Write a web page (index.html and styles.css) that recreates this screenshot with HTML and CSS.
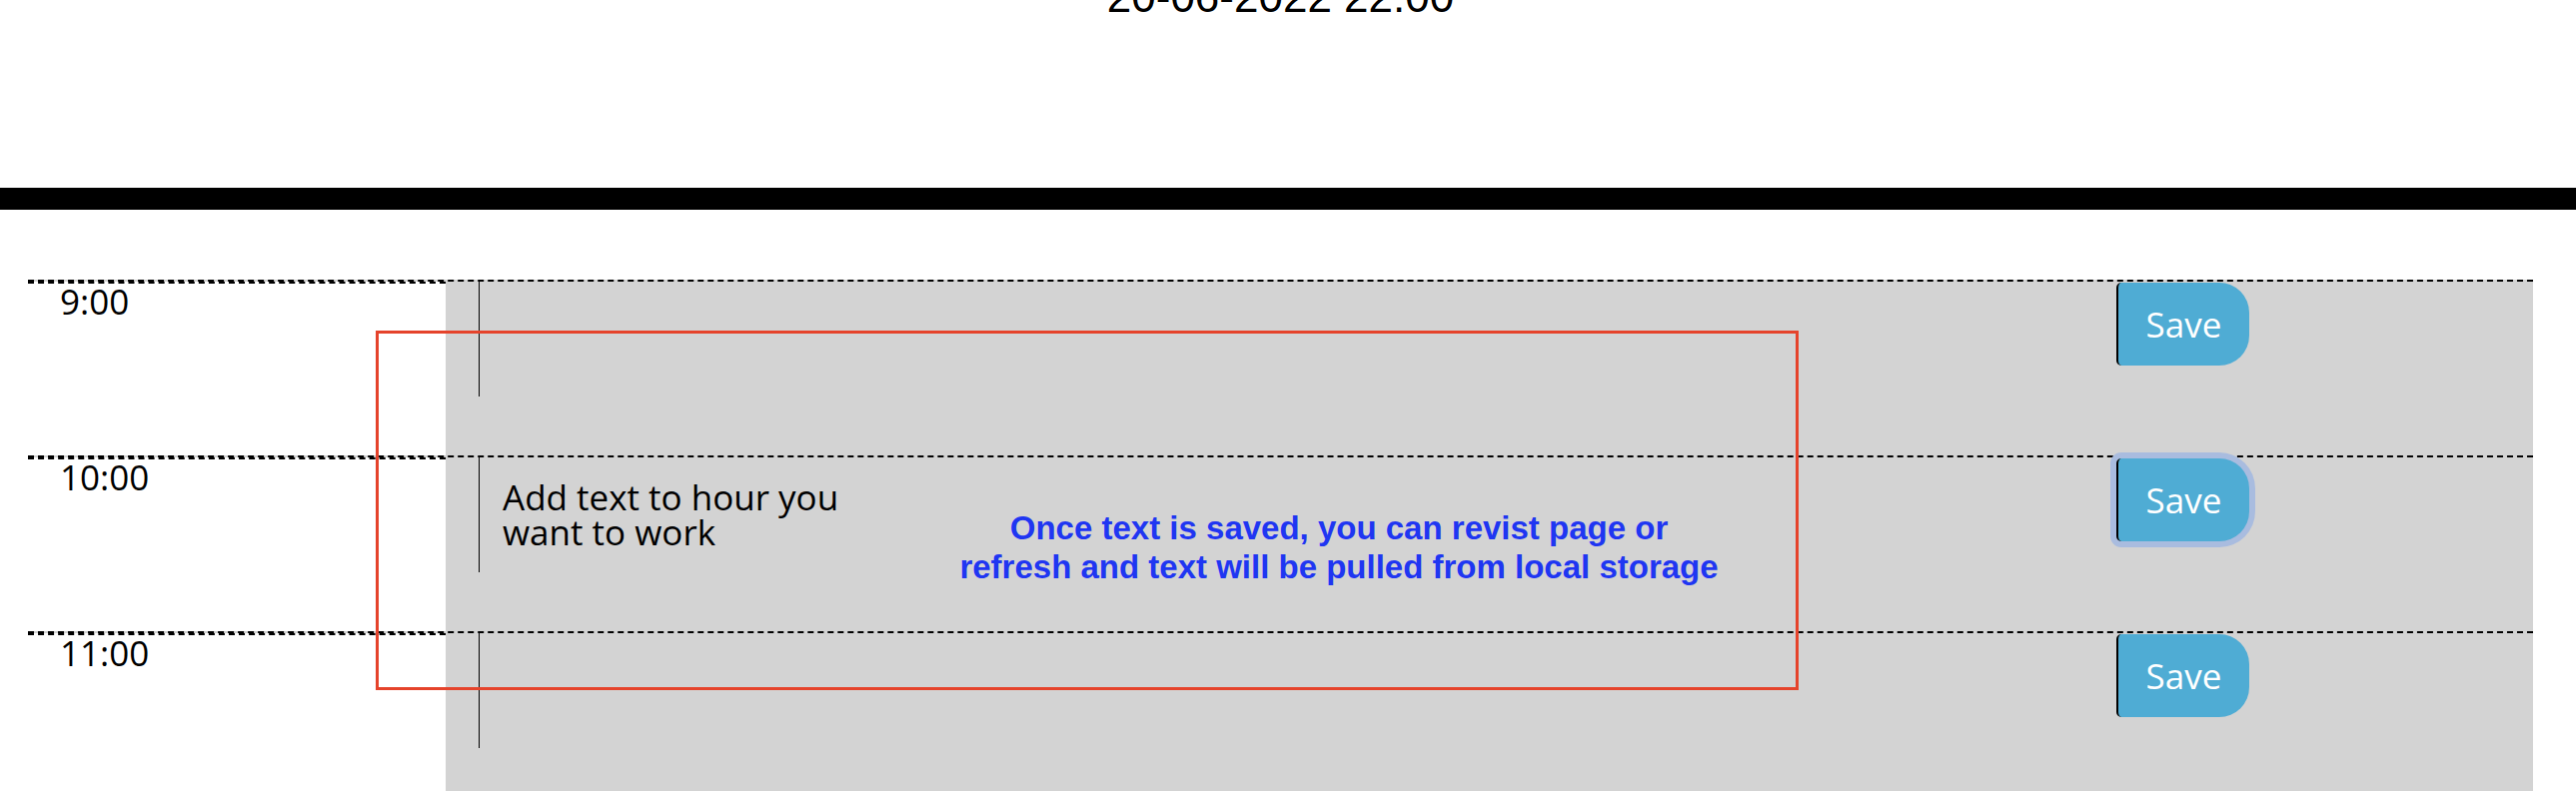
FILE: index.html
```html
<!DOCTYPE html>
<html lang="en">
<head>
<meta charset="utf-8">
<title>Work Day Scheduler</title>
<link rel="stylesheet" href="styles.css">
</head>
<body>
<header class="jumbotron">
  <p class="current-day">20-06-2022 22:00</p>
</header>
<main class="container">
  <div class="row time-block past">
    <div class="hour">9:00</div>
    <textarea class="description"></textarea>
    <button class="save-btn">Save</button>
  </div>
  <div class="row time-block past">
    <div class="hour">10:00</div>
    <textarea class="description">Add text to hour you
want to work</textarea>
    <button class="save-btn focused">Save</button>
  </div>
  <div class="row time-block past">
    <div class="hour">11:00</div>
    <textarea class="description"></textarea>
    <button class="save-btn">Save</button>
  </div>
</main>
<div class="note-box"></div>
<p class="note-text">Once text is saved, you can revist page or<br>refresh and text will be pulled from local storage</p>
</body>
</html>
```

FILE: styles.css
```css
html, body {
  margin: 0;
  padding: 0;
  background: #ffffff;
  overflow: hidden;
}

body {
  font-family: "Open Sans", "Noto Sans", sans-serif;
  line-height: 1;
  width: 2578px;
  height: 792px;
  position: relative;
}

.jumbotron {
  display: flow-root;
  box-sizing: content-box;
  height: 188px;
  padding: 0 43px 0 28px;
  border-bottom: 22px solid #000000;
  text-align: center;
}

.current-day {
  margin: -25px 0 0 0;
  font-family: "Liberation Sans", Arial, sans-serif;
  font-size: 44px;
  line-height: 44px;
  color: #000000;
}

.container {
  margin: 70px 43px 0 28px;
}

.row {
  display: flex;
  align-items: flex-start;
  box-sizing: border-box;
  height: 176px;
  border-top: 2px dashed #000000;
}

.past {
  background-color: #d3d3d3;
}

.hour {
  box-sizing: border-box;
  width: 418px;
  height: 100%;
  flex: none;
  padding-left: 32px;
  background: #ffffff;
  border-top: 2px dashed #000000;
  font-size: 35px;
  line-height: 1;
  color: #000000;
}

.description {
  flex: 1;
  box-sizing: border-box;
  height: 115px;
  margin: 0 0 0 33px;
  padding: 22px 23px;
  background: transparent;
  border: none;
  border-left: 1px solid #000000;
  resize: none;
  outline: none;
  font-family: "Open Sans", "Noto Sans", sans-serif;
  font-size: 35px;
  line-height: 1;
  color: #000000;
  white-space: pre-wrap;
  overflow: hidden;
}

.save-btn {
  flex: none;
  box-sizing: border-box;
  width: 133px;
  height: 83px;
  margin: 1px 284px 0 0;
  padding: 0;
  display: flex;
  align-items: center;
  justify-content: center;
  background-color: #4facd4;
  color: #ffffff;
  border: none;
  border-left: 2px solid #000000;
  border-radius: 5px 30px 30px 5px;
  font-family: "Open Sans", "Noto Sans", sans-serif;
  font-size: 35px;
  line-height: 1;
}

.focused {
  box-shadow: 0 0 0 6px #a9bcdf;
}

.note-box {
  position: absolute;
  left: 376px;
  top: 331px;
  width: 1424px;
  height: 360px;
  box-sizing: border-box;
  border: 3px solid #e5432b;
  pointer-events: none;
}

.note-text {
  position: absolute;
  left: 940px;
  top: 509px;
  width: 800px;
  margin: 0;
  text-align: center;
  font-family: "Liberation Sans", Arial, sans-serif;
  font-weight: bold;
  font-size: 33px;
  line-height: 39px;
  color: #1f36f2;
}
```
